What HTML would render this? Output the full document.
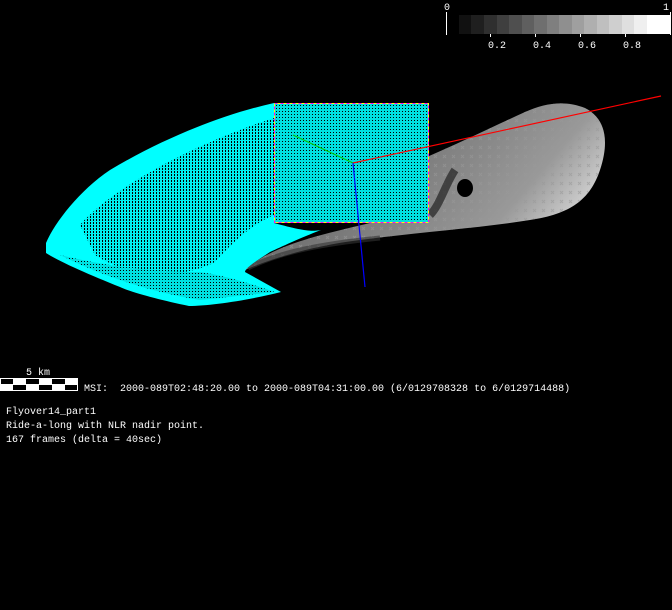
<!DOCTYPE html>
<html><head><meta charset="utf-8"><style>
html,body{margin:0;padding:0;background:#000;width:672px;height:610px;overflow:hidden}
svg{position:absolute;left:0;top:0}
.t{font-family:"Liberation Mono",monospace;font-size:10px;fill:#fff;white-space:pre}
</style></head><body>
<svg width="672" height="610" viewBox="0 0 672 610" xmlns="http://www.w3.org/2000/svg">
<defs>
<linearGradient id="g" x1="0" y1="0" x2="1" y2="0.4">
<stop offset="0" stop-color="#555"/><stop offset="0.5" stop-color="#7a7a7a"/><stop offset="0.85" stop-color="#999"/><stop offset="1" stop-color="#c8c8c8"/></linearGradient>
<pattern id="mesh" width="3" height="3" patternUnits="userSpaceOnUse">
<rect width="3" height="3" fill="#00f0f0"/><rect width="1" height="2" fill="#000"/></pattern>
<pattern id="mesh2" width="3" height="3" patternUnits="userSpaceOnUse">
<rect width="3" height="3" fill="#00e0e0"/><rect width="1" height="1" fill="#000"/></pattern>
<pattern id="dots" width="9" height="9" patternUnits="userSpaceOnUse">
<path d="M2,2 l3,3 M5,2 l-3,3" stroke="#999" stroke-width="1"/></pattern>
</defs>
<!-- colorbar -->
<g>
<rect x="459" y="15" width="13" height="19" fill="#111"/>
<rect x="471" y="15" width="13" height="19" fill="#1f1f1f"/>
<rect x="484" y="15" width="13" height="19" fill="#2f2f2f"/>
<rect x="497" y="15" width="13" height="19" fill="#3f3f3f"/>
<rect x="509" y="15" width="13" height="19" fill="#4f4f4f"/>
<rect x="522" y="15" width="13" height="19" fill="#5f5f5f"/>
<rect x="534" y="15" width="13" height="19" fill="#6f6f6f"/>
<rect x="547" y="15" width="13" height="19" fill="#7f7f7f"/>
<rect x="559" y="15" width="13" height="19" fill="#8f8f8f"/>
<rect x="572" y="15" width="13" height="19" fill="#9f9f9f"/>
<rect x="584" y="15" width="13" height="19" fill="#afafaf"/>
<rect x="597" y="15" width="13" height="19" fill="#bfbfbf"/>
<rect x="609" y="15" width="13" height="19" fill="#cfcfcf"/>
<rect x="622" y="15" width="13" height="19" fill="#dfdfdf"/>
<rect x="634" y="15" width="13" height="19" fill="#efefef"/>
<rect x="647" y="15" width="24" height="19" fill="#fff"/>
<line x1="446.5" y1="12" x2="446.5" y2="35" stroke="#fff"/>
<line x1="670.5" y1="12" x2="670.5" y2="35" stroke="#fff"/>
<line x1="490.5" y1="34" x2="490.5" y2="37" stroke="#fff"/>
<line x1="535.5" y1="34" x2="535.5" y2="37" stroke="#fff"/>
<line x1="580.5" y1="34" x2="580.5" y2="37" stroke="#fff"/>
<line x1="625.5" y1="34" x2="625.5" y2="37" stroke="#fff"/>
<text class="t" x="444" y="10">0</text>
<text class="t" x="663" y="10">1</text>
<text class="t" x="488" y="48">0.2</text>
<text class="t" x="533" y="48">0.4</text>
<text class="t" x="578" y="48">0.6</text>
<text class="t" x="623" y="48">0.8</text>
</g>
<!-- gray asteroid -->
<path d="M245,270 C280,255 320,245 360,240 C420,232 480,228 530,220 C570,214 590,200 600,170 C610,140 605,118 585,108 C565,100 545,103 525,112 C490,128 455,145 420,160 L400,215 C350,230 280,238 245,270 Z" fill="url(#g)"/>
<path d="M245,270 C280,255 320,245 360,240 C420,232 480,228 530,220 C570,214 590,200 600,170 C610,140 605,118 585,108 C565,100 545,103 525,112 C490,128 455,145 420,160 L400,215 C350,230 280,238 245,270 Z" fill="url(#dots)" opacity=".6"/>
<ellipse cx="465" cy="188" rx="8" ry="9" fill="#000"/>
<path d="M430,215 C440,205 445,185 455,170" stroke="#222" stroke-width="8" fill="none" opacity=".7"/>
<path d="M248,268 C280,252 320,244 380,238" stroke="#333" stroke-width="5" fill="none" opacity=".6"/>
<!-- cyan -->
<path d="M46,243 C55,222 80,190 110,170 C160,140 220,115 274,103 L274,223 C300,230 310,232 321,230 C300,238 281,247 270,252 C258,260 245,268 245,272 L281,292 C250,300 210,306 189,306 C160,300 130,292 120,287 C90,275 60,262 46,253 Z" fill="#00ffff"/>
<path d="M80,225 C110,190 190,145 274,118 L274,215 C250,225 230,245 215,262 C180,280 130,278 95,255 Z" fill="url(#mesh)"/>
<path d="M60,255 C100,275 150,292 200,300 L275,292 C240,280 220,275 200,272 C150,272 100,265 60,255 Z" fill="url(#mesh2)"/>
<rect x="274" y="103" width="155" height="120" fill="url(#mesh2)"/>
<rect x="274.5" y="103.5" width="154" height="119" fill="none" stroke="#ff00ff" stroke-dasharray="3,3"/>
<rect x="274.5" y="103.5" width="154" height="119" fill="none" stroke="#ffff00" stroke-dasharray="3,3" stroke-dashoffset="3"/>
<line x1="293" y1="135" x2="353" y2="163" stroke="#0c0" stroke-width="1"/>
<line x1="353" y1="163" x2="661" y2="96" stroke="#f00" stroke-width="1.2"/>
<line x1="353" y1="163" x2="365" y2="287" stroke="#00f" stroke-width="1.2"/>
<!-- scale bar -->
<rect x="0" y="378" width="78" height="13" fill="#fff"/>
<rect x="1" y="379" width="12" height="5" fill="#000"/>
<rect x="13" y="385" width="13" height="5" fill="#000"/>
<rect x="26" y="379" width="13" height="5" fill="#000"/>
<rect x="39" y="385" width="13" height="5" fill="#000"/>
<rect x="52" y="379" width="13" height="5" fill="#000"/>
<rect x="65" y="385" width="12" height="5" fill="#000"/>
<text class="t" x="26" y="375">5 km</text>
<text class="t" x="84" y="391" xml:space="preserve">MSI:  2000-089T02:48:20.00 to 2000-089T04:31:00.00 (6/0129708328 to 6/0129714488)</text>
<text class="t" x="6" y="414">Flyover14_part1</text>
<text class="t" x="6" y="428">Ride-a-long with NLR nadir point.</text>
<text class="t" x="6" y="442">167 frames (delta = 40sec)</text>
</svg>
</body></html>
